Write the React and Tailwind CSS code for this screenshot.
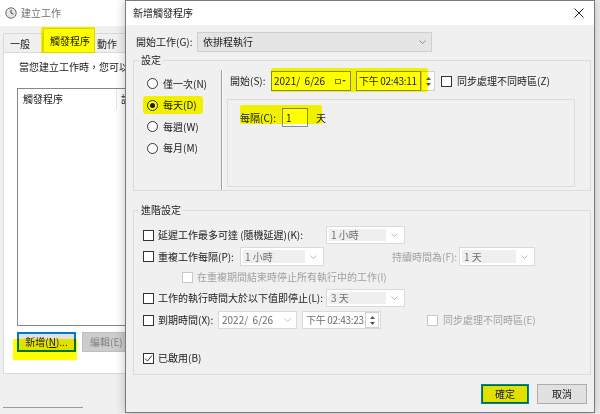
import React from 'react';

function Chevron() {
  return (
    <svg width="7" height="4" viewBox="0 0 7 4">
      <polyline points="0.5,0.5 3.5,3.5 6.5,0.5" fill="none" stroke="currentColor" strokeWidth="1" />
    </svg>
  );
}

function Checkbox({ checked, disabled }) {
  return (
    <span className={`w-[11px] h-[11px] shrink-0 border bg-white flex items-center justify-center ${disabled ? 'border-[#c8c8c8]' : 'border-[#333333]'}`}>
      {checked && (
        <svg width="9" height="9" viewBox="0 0 9 9">
          <polyline points="1,4.5 3.5,7 8,1.5" fill="none" stroke="#333" strokeWidth="1" />
        </svg>
      )}
    </span>
  );
}

function Radio({ checked }) {
  return (
    <span className="w-[11px] h-[11px] shrink-0 rounded-full border border-[#333333] bg-white flex items-center justify-center">
      {checked && <span className="w-[5px] h-[5px] rounded-full bg-[#1a1a1a]" />}
    </span>
  );
}

function Spin({ light }) {
  return (
    <span className={`w-[14px] h-full shrink-0 flex flex-col items-center justify-center gap-[3px] ${light ? 'border border-[#d0d0d0] bg-white' : ''}`}>
      <svg width="5" height="3" viewBox="0 0 5 3"><polygon points="0,3 2.5,0 5,3" fill="#555" /></svg>
      <svg width="5" height="3" viewBox="0 0 5 3"><polygon points="0,0 2.5,3 5,0" fill="#555" /></svg>
    </span>
  );
}

function DisabledSelect({ w, text }) {
  return (
    <div className={`${w} h-full shrink-0 border border-[#d9d9d9] bg-white p-[2px] flex`}>
      <div className="flex-1 bg-[#efefef] flex items-center pl-[2px] text-[#6d6d6d] whitespace-nowrap">{text}</div>
      <div className="w-[16px] flex items-center justify-center text-[#bdbdbd]"><Chevron /></div>
    </div>
  );
}

function ClockIcon() {
  return (
    <svg width="12" height="12" viewBox="0 0 12 12">
      <circle cx="6" cy="6" r="5.2" fill="#e6e6e6" stroke="#6b6b6b" strokeWidth="1" />
      <polyline points="6,2.8 6,6 8.4,7.2" fill="none" stroke="#444" strokeWidth="1" />
    </svg>
  );
}

function BackWindow() {
  return (
    <div className="w-[126px] h-[414px] overflow-hidden">
      <div className="w-[600px] h-[414px] flex flex-col">
        <div className="h-[26px] bg-white flex items-center pl-[5px] gap-[4px] text-[#707070] shrink-0">
          <ClockIcon />
          <span>建立工作</span>
        </div>
        <div className="flex-1 flex flex-col px-[3px]">
          <div className="h-[27px] flex items-end">
            <div className="w-[40px] h-[20px] border border-b-0 border-[#d9d9d9] bg-[#f0f0f0] flex items-center pl-[6px]">一般</div>
            <div className="w-[52px] h-[25px] border border-b-0 border-[#d9d9d9] bg-white flex items-center pl-[6px]">觸發程序</div>
            <div className="w-[44px] h-[20px] border border-b-0 border-l-0 border-[#d9d9d9] bg-[#f0f0f0] flex items-center pl-[2px]">動作</div>
          </div>
          <div className="h-[322px] -mt-px bg-white border border-[#d9d9d9] flex flex-col pl-[13px]">
            <div className="pt-[7px] pl-[2px] w-[108px] overflow-hidden whitespace-nowrap">當您建立工作時，您可以指</div>
            <div className="mt-[14px] h-[238px] w-[300px] border border-[#828790] bg-white">
              <div className="flex h-[20px] items-center">
                <div className="w-[98px] pl-[5px]">觸發程序</div>
                <div className="w-px h-full bg-[#e5e5e5]" />
                <div className="pl-[4px] w-[8px] overflow-hidden whitespace-nowrap">詳</div>
              </div>
            </div>
            <div className="mt-[6px] flex gap-[6px] h-[20px]">
              <div className="w-[59px] h-full border-2 border-[#0078d7] bg-[#e1e1e1] flex items-center justify-center">新增(<span className="underline">N</span>)...</div>
              <div className="w-[70px] h-full border border-[#bfbfbf] bg-[#cccccc] text-[#838383] flex items-center pl-[7px]">
                <span className="w-[38px] overflow-hidden whitespace-nowrap">編輯(E)</span>
              </div>
            </div>
          </div>
          <div className="mt-[33px] h-px w-[80px] bg-[#9a9a9a]" />
        </div>
      </div>
    </div>
  );
}

function Dialog() {
  return (
    <div className="absolute left-[125px] top-0 w-[470px] h-[413px] bg-[#f0f0f0] border border-[#7a7a7a] shadow-[0_0_10px_rgba(0,0,0,0.25)] flex flex-col">
      <div className="h-[24px] bg-white flex items-center justify-between pl-[7px] pr-[10px] shrink-0">
        <span>新增觸發程序</span>
        <svg width="10" height="10" viewBox="0 0 10 10">
          <path d="M0.5 0.5 L9.5 9.5 M9.5 0.5 L0.5 9.5" stroke="#222" strokeWidth="1" />
        </svg>
      </div>

      <div className="flex flex-col pl-[7px] pr-[3px]">
        <div className="mt-[7px] h-[20px] flex items-center">
          <div className="w-[61px] ml-[3px]">開始工作(G):</div>
          <div className="w-[235px] h-full border border-[#cfcfcf] bg-[#e5e5e5] flex items-center justify-between pl-[5px] pr-[5px]">
            <span>依排程執行</span>
            <span className="text-[#8a8a8a]"><Chevron /></span>
          </div>
        </div>

        <fieldset className="border border-[#dcdcdc] w-[458px]">
          <legend className="ml-[5px] px-[2px] leading-[16px]">設定</legend>
          <div className="h-[122px] flex">
            <div className="w-[87px] pl-[13px] pt-[5px] flex flex-col">
              {[
                ['僅一次(N)', false],
                ['每天(D)', true],
                ['每週(W)', false],
                ['每月(M)', false],
              ].map(([t, c]) => (
                <div key={t} className="h-[21.5px] flex items-center gap-[5px]">
                  <Radio checked={c} />
                  <span>{t}</span>
                </div>
              ))}
            </div>
            <div className="w-px mt-[2px] bg-[#a0a0a0]" />
            <div className="w-px mt-[2px] bg-white" />
            <div className="flex-1 flex flex-col">
              <div className="mt-[3px] h-[20px] flex items-center pl-[7px]">
                <div className="w-[41px] shrink-0">開始(S):</div>
                <div className="w-[80px] h-full shrink-0 border border-[#8c8c8c] bg-white flex items-center justify-between pl-[2px] pr-[4px]">
                  <span className="whitespace-pre">2021/  6/26</span>
                  <span className="flex items-center gap-[1px]">
                    <span className="w-[6px] h-[5px] border border-[#777]" />
                    <svg width="4" height="2" viewBox="0 0 4 2"><polygon points="0,0 4,0 2,2" fill="#555" /></svg>
                  </span>
                </div>
                <div className="ml-[5px] w-[65px] h-full shrink-0 border border-[#8c8c8c] bg-white flex items-center pl-[2px] whitespace-nowrap overflow-hidden tracking-[-0.3px]">下午 02:43:11</div>
                <Spin light />
                <div className="ml-[6px]"><Checkbox /></div>
                <span className="ml-[5px] whitespace-nowrap">同步處理不同時區(Z)</span>
              </div>
              <div className="mt-[8px] ml-[4px] w-[348px] h-[88px] border border-[#dcdcdc] pl-[12px] pt-[8px]">
                <div className="h-[19px] flex items-center">
                  <div className="w-[42px]">每隔(C):</div>
                  <div className="w-[26px] h-full border border-[#8c8c8c] bg-white flex items-center pl-[3px]">1</div>
                  <span className="ml-[8px]">天</span>
                </div>
              </div>
            </div>
          </div>
        </fieldset>

        <fieldset className="mt-[11px] border border-[#dcdcdc] w-[458px]">
          <legend className="ml-[5px] px-[2px] leading-[16px]">進階設定</legend>
          <div className="h-[156px] flex flex-col pl-[9px] whitespace-nowrap">
            <div className="mt-[8px] h-[18px] flex items-center">
              <Checkbox />
              <div className="ml-[4px] w-[168px] shrink-0">延遲工作最多可達 (隨機延遲)(K):</div>
              <DisabledSelect w="w-[79px]" text="1 小時" />
            </div>
            <div className="mt-[3px] h-[19px] flex items-center">
              <Checkbox />
              <div className="ml-[4px] w-[82px] shrink-0">重複工作每隔(P):</div>
              <DisabledSelect w="w-[84px]" text="1 小時" />
              <div className="ml-[68px] w-[67px] shrink-0 text-[#a0a0a0]">持續時間為(F):</div>
              <DisabledSelect w="w-[76px]" text="1 天" />
            </div>
            <div className="mt-[3px] h-[16px] flex items-center pl-[39px]">
              <Checkbox disabled />
              <span className="ml-[4px] text-[#a0a0a0]">在重複期間結束時停止所有執行中的工作(I)</span>
            </div>
            <div className="mt-[4px] h-[18px] flex items-center">
              <Checkbox />
              <div className="ml-[4px] w-[168px] shrink-0">工作的執行時間大於以下值即停止(L):</div>
              <DisabledSelect w="w-[79px]" text="3 天" />
            </div>
            <div className="mt-[4px] h-[18px] flex items-center">
              <Checkbox />
              <div className="ml-[4px] w-[60px] shrink-0">到期時間(X):</div>
              <div className="w-[79px] h-full shrink-0 border border-[#d9d9d9] bg-white flex items-center justify-between pl-[3px] pr-[5px] text-[#6d6d6d]">
                <span className="whitespace-pre">2022/  6/26</span>
                <span className="text-[#c0c0c0]"><Chevron /></span>
              </div>
              <div className="ml-[5px] w-[79px] h-full shrink-0 border border-[#d9d9d9] bg-white flex items-center justify-between pl-[3px] pr-px text-[#6d6d6d]">
                <span className="tracking-[-0.3px]">下午 02:43:23</span>
                <Spin light />
              </div>
              <div className="ml-[46px]"><Checkbox disabled /></div>
              <span className="ml-[5px] text-[#a0a0a0]">同步處理不同時區(E)</span>
            </div>
            <div className="mt-[21px] h-[16px] flex items-center">
              <Checkbox checked />
              <span className="ml-[4px]">已啟用(B)</span>
            </div>
          </div>
        </fieldset>

        <div className="mt-[9px] h-[20px] flex justify-end gap-[8px] pr-[4px]">
          <div className="w-[48px] h-full border-2 border-[#0078d7] bg-[#e1e1e1] flex items-center justify-center">確定</div>
          <div className="w-[50px] h-full border border-[#adadad] bg-[#e1e1e1] flex items-center justify-center">取消</div>
        </div>
      </div>
    </div>
  );
}

export default function App() {
  return (
    <div className="relative w-[600px] h-[414px] overflow-hidden bg-[#f0f0f0] text-[10px] leading-[14px] text-[#1a1a1a] font-['Noto_Sans_CJK_TC','Noto_Sans',sans-serif]">
      <BackWindow />
      <Dialog />
      {/* highlighter marks */}
      <div className="absolute left-[41px] top-[27px] w-[54px] h-[26px] bg-[#ffff00] mix-blend-multiply pointer-events-none" />
      <div className="absolute left-[13px] top-[339px] w-[64px] h-[21px] bg-[#ffff00] mix-blend-multiply pointer-events-none" />
      <div className="absolute left-[143px] top-[96px] w-[60px] h-[18px] rounded-[3px] bg-[#ffff00] mix-blend-multiply pointer-events-none" />
      <div className="absolute left-[271px] top-[68px] w-[157px] h-[24px] rounded-[2px] bg-[#ffff00] mix-blend-multiply pointer-events-none" />
      <div className="absolute left-[240px] top-[105px] w-[82px] h-[19px] rounded-[2px] bg-[#ffff00] mix-blend-multiply pointer-events-none" />
      <div className="absolute left-[482px] top-[385px] w-[46px] h-[18px] bg-[#ffff00] mix-blend-multiply pointer-events-none" />
    </div>
  );
}
